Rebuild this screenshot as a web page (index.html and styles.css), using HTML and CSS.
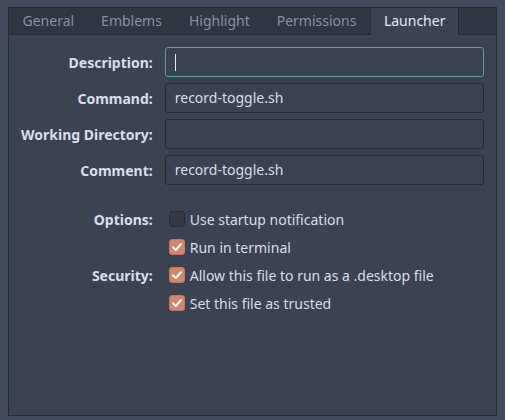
FILE: index.html
```html
<!DOCTYPE html>
<html>
<head>
<meta charset="utf-8">
<link rel="stylesheet" href="styles.css">
</head>
<body>
<div class="notebook">
  <div class="tabs">
    <div class="tab">General</div>
    <div class="tab">Emblems</div>
    <div class="tab">Highlight</div>
    <div class="tab">Permissions</div>
    <div class="tab active">Launcher</div>
  </div>
  <div class="page">
    <div class="form">
      <div class="label">Description:</div>
      <div class="entry focus"><span class="cursor"></span></div>
      <div class="label">Command:</div>
      <div class="entry">record-toggle.sh</div>
      <div class="label">Working Directory:</div>
      <div class="entry"></div>
      <div class="label">Comment:</div>
      <div class="entry">record-toggle.sh</div>
      <div class="spacer"></div>
      <div class="label">Options:</div>
      <div class="check"><span class="box"></span>Use startup notification</div>
      <div class="label"></div>
      <div class="check"><span class="box on"><svg viewBox="0 0 16 16" width="16" height="16"><path d="M4 8.2 L6.8 11 L12 5.2" fill="none" stroke="#fff" stroke-width="2" stroke-linecap="round" stroke-linejoin="round"/></svg></span>Run in terminal</div>
      <div class="label">Security:</div>
      <div class="check"><span class="box on"><svg viewBox="0 0 16 16" width="16" height="16"><path d="M4 8.2 L6.8 11 L12 5.2" fill="none" stroke="#fff" stroke-width="2" stroke-linecap="round" stroke-linejoin="round"/></svg></span>Allow this file to run as a .desktop file</div>
      <div class="label"></div>
      <div class="check"><span class="box on"><svg viewBox="0 0 16 16" width="16" height="16"><path d="M4 8.2 L6.8 11 L12 5.2" fill="none" stroke="#fff" stroke-width="2" stroke-linecap="round" stroke-linejoin="round"/></svg></span>Set this file as trusted</div>
    </div>
  </div>
</div>
</body>
</html>
```

FILE: styles.css
```css
html, body {
  margin: 0;
  padding: 0;
  height: 100%;
}
body {
  background: #434c5e;
  font-family: "Noto Sans", "Open Sans", sans-serif;
  font-size: 14px;
  color: #d8dee9;
  padding: 7px 8px 4px 8px;
  box-sizing: border-box;
}
.notebook {
  height: 100%;
  box-sizing: border-box;
  border: 1px solid #242933;
  display: flex;
  flex-direction: column;
  background: #3b4252;
}
.tabs {
  display: flex;
  background: #2f3543;
  height: 26px;
  border-bottom: 1px solid #242933;
}
.tab {
  padding: 0 13.5px;
  line-height: 26px;
  color: #8791a3;
}
.tab.active {
  background: #3b4252;
  color: #e5e9f0;
  border-left: 1px solid #242933;
  border-right: 1px solid #242933;
  margin-bottom: -1px;
  height: 27px;
  padding: 0 13px;
}
.page {
  flex: 1;
  padding: 12px 12px;
}
.form {
  display: grid;
  grid-template-columns: auto 1fr;
  column-gap: 12px;
  row-gap: 6px;
  align-items: center;
}
.spacer {
  grid-column: 1 / span 2;
  height: 11px;
}
.label {
  text-align: right;
  font-weight: bold;
  color: #d8dee9;
}
.entry {
  height: 28px;
  border: 1px solid #262b35;
  border-radius: 3px;
  background: #3b4252;
  line-height: 28px;
  padding: 0 9px;
  color: #d8dee9;
}
.entry.focus {
  border-color: #5fa39a;
  display: flex;
  align-items: center;
}
.cursor {
  display: block;
  width: 1px;
  height: 17px;
  background: #e5e9f0;
}
.check {
  display: flex;
  align-items: center;
  height: 22px;
  padding-left: 4px;
  gap: 5px;
}
.box {
  width: 14px;
  height: 14px;
  border: 1px solid #272c36;
  border-radius: 3px;
  background: #323846;
  display: block;
  flex: none;
  position: relative;
}
.box.on {
  background: #d08770;
  border-color: #c17a65;
}
.box svg {
  position: absolute;
  left: -1px;
  top: -1px;
}
```
